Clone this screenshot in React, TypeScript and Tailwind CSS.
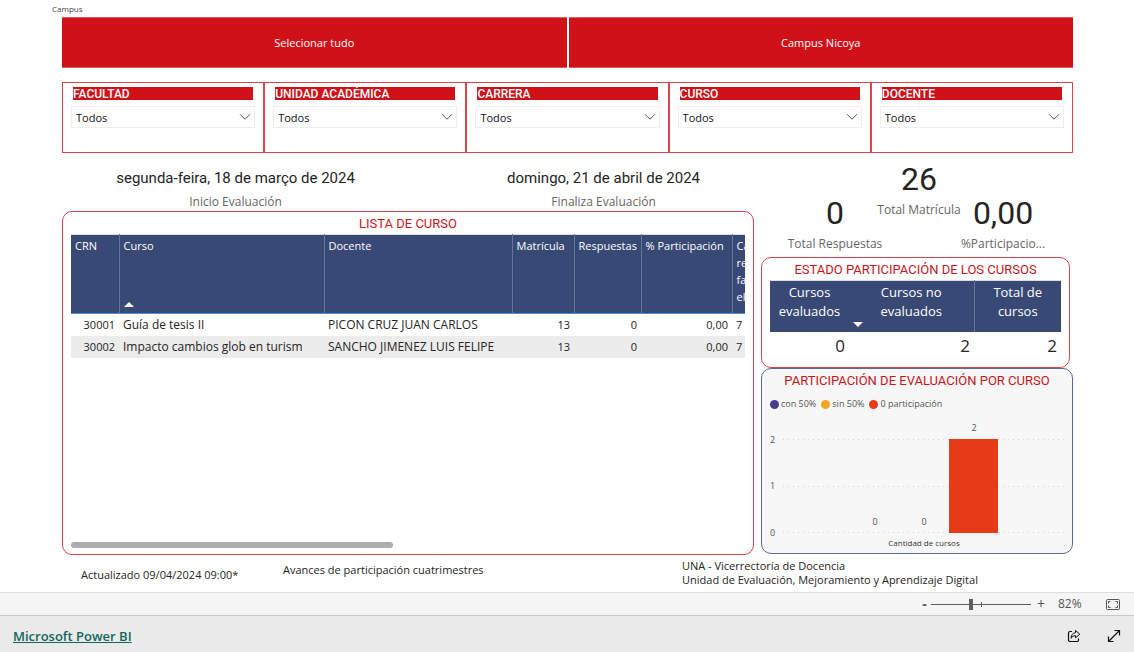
const slicers = [
    { id: 'facultad', label: 'FACULTAD' },
    { id: 'unidad', label: 'UNIDAD ACADÉMICA' },
    { id: 'carrera', label: 'CARRERA' },
    { id: 'curso', label: 'CURSO' },
    { id: 'docente', label: 'DOCENTE' },
];

const courses = [
    { crn: '30001', curso: 'Guía de tesis II', docente: 'PICON CRUZ JUAN CARLOS', matricula: 13, respuestas: 0, pct: '0,00', faltan: 7 },
    { crn: '30002', curso: 'Impacto cambios glob en turism', docente: 'SANCHO JIMENEZ LUIS FELIPE', matricula: 13, respuestas: 0, pct: '0,00', faltan: 7 },
];

const legend = [
    { label: 'con 50%', color: 'bg-[#4a3c8f]' },
    { label: 'sin 50%', color: 'bg-[#f5a623]' },
    { label: '0 participación', color: 'bg-[#e73a16]' },
];

function CampusTiles() {
    return (
        <div className="grid grid-cols-2 gap-[2px]">
            {['Selecionar tudo', 'Campus Nicoya'].map((name) => (
                <button
                    key={name}
                    type="button"
                    className="h-[51px] border-y border-[#dd5a60] bg-[#d01218] pt-[2px] text-[11px] text-white"
                >
                    {name}
                </button>
            ))}
        </div>
    );
}

function Slicer({ id, label }: { id: string; label: string }) {
    return (
        <div className="h-[71px] border border-[#d8454c] px-2 pt-1">
            <label
                htmlFor={id}
                className="mx-[2px] block h-[13px] bg-[#d01218] font-['Roboto',sans-serif] text-[12px] leading-[15px] font-medium text-white"
            >
                {label}
            </label>
            <div className="relative mt-[6px]">
                <select
                    id={id}
                    className="block h-[22px] w-full appearance-none border border-[#eeeeee] bg-white pt-px pl-1 text-[11px] leading-5 text-[#111111]"
                >
                    <option>Todos</option>
                </select>
                <svg
                    viewBox="0 0 12 8"
                    className="pointer-events-none absolute top-[7px] right-[4px] h-2 w-3"
                    fill="none"
                    stroke="#555566"
                >
                    <path d="M1 1.2 6 6.2l5-5" />
                </svg>
            </div>
        </div>
    );
}

function DateCard({ value, label }: { value: string; label: string }) {
    return (
        <div className="flex flex-col items-center whitespace-nowrap">
            <p className="font-['Roboto',sans-serif] text-[15px] leading-5 text-[#252423]">{value}</p>
            <p className="mt-1 text-[12px] leading-5 text-[#666666]">{label}</p>
        </div>
    );
}

function Kpi({ value, label, low }: { value: string; label: string; low?: boolean }) {
    return (
        <div className={`flex flex-col items-center whitespace-nowrap ${low ? 'pt-[34px]' : ''}`}>
            <p className="font-['Roboto',sans-serif] text-[32px] leading-9 text-[#252423]">{value}</p>
            <p className="mt-[3px] text-[12px] leading-5 text-[#666666]">{label}</p>
        </div>
    );
}

function CourseTable() {
    return (
        <section className="flex h-[344px] flex-col rounded-[10px] border border-[#d8454c] px-2">
            <h2 className="pt-[2px] text-center font-['Roboto',sans-serif] text-[13px] leading-5 text-[#c8141c]">
                LISTA DE CURSO
            </h2>
            <div className="overflow-hidden">
                <table className="w-full table-fixed border-collapse text-[11px] text-[#252423]">
                    <colgroup>
                        <col className="w-[48px]" />
                        <col />
                        <col className="w-[188px]" />
                        <col className="w-[62px]" />
                        <col className="w-[67px]" />
                        <col className="w-[91px]" />
                        <col className="w-[13px]" />
                    </colgroup>
                    <thead>
                        <tr className="h-[79px] border-t border-b border-t-[#dddddd] border-b-[#4d8fdc] bg-[#384975] text-left align-top leading-[17px] text-white [&>th]:border-r [&>th]:border-[#66749a] [&>th]:pt-[2px] [&>th]:pl-1 [&>th]:font-normal [&>th]:whitespace-nowrap [&>th:last-child]:border-r-0">
                            <th>CRN</th>
                            <th>
                                Curso
                                <svg viewBox="0 0 10 5" className="mt-[48px] h-[5px] w-[10px]" fill="#ffffff">
                                    <path d="M0 5 5 0l5 5z" />
                                </svg>
                            </th>
                            <th>Docente</th>
                            <th>Matrícula</th>
                            <th>Respuestas</th>
                            <th>% Participación</th>
                            <th className="overflow-hidden">
                                Ca
                                <br />
                                re
                                <br />
                                fa
                                <br />
                                el
                            </th>
                        </tr>
                    </thead>
                    <tbody>
                        {courses.map((c) => (
                            <tr
                                key={c.crn}
                                className="h-[22px] leading-[22px] even:bg-[#ececec] [&>td]:px-1 [&>td]:whitespace-nowrap"
                            >
                                <td className="text-right">{c.crn}</td>
                                <td className="text-[12px]">{c.curso}</td>
                                <td className="text-[12px]">{c.docente}</td>
                                <td className="text-right">{c.matricula}</td>
                                <td className="text-right">{c.respuestas}</td>
                                <td className="text-right">{c.pct}</td>
                                <td>{c.faltan}</td>
                            </tr>
                        ))}
                    </tbody>
                </table>
            </div>
            <div className="mt-auto mb-[6px] h-[6px] w-[322px] rounded-full bg-[#adadad]" />
        </section>
    );
}

function StatusTable() {
    return (
        <section className="mr-[3px] h-[111px] rounded-[10px] border border-[#d8454c] px-2">
            <h2 className="pt-[2px] text-center font-['Roboto',sans-serif] text-[13px] leading-5 text-[#c8141c]">
                ESTADO PARTICIPACIÓN DE LOS CURSOS
            </h2>
            <table className="w-full table-fixed border-collapse text-[#252423]">
                <colgroup>
                    <col className="w-[79px]" />
                    <col />
                    <col className="w-[87px]" />
                </colgroup>
                <thead>
                    <tr className="h-[51px] border-t border-[#dddddd] bg-[#384975] align-top text-[13px] leading-[19px] text-white [&>th]:pt-[2px] [&>th]:font-normal">
                        <th>
                            Cursos
                            <br />
                            evaluados
                        </th>
                        <th className="relative border-r border-[#66749a]">
                            Cursos no
                            <br />
                            evaluados
                            <svg
                                viewBox="0 0 10 5"
                                className="absolute bottom-[5px] left-1 h-[5px] w-[10px]"
                                fill="#ffffff"
                            >
                                <path d="M0 0h10L5 5z" />
                            </svg>
                        </th>
                        <th>
                            Total de
                            <br />
                            cursos
                        </th>
                    </tr>
                </thead>
                <tbody>
                    <tr className="text-right text-[17px] leading-7 [&>td]:pr-1">
                        <td>0</td>
                        <td>2</td>
                        <td>2</td>
                    </tr>
                </tbody>
            </table>
        </section>
    );
}

function ParticipationChart() {
    return (
        <section className="h-[186px] overflow-hidden rounded-[10px] border border-[#596a96] bg-[#f7f7f7]">
            <h2 className="pt-[2px] text-center font-['Roboto',sans-serif] text-[13px] leading-5 text-[#c8141c]">
                PARTICIPACIÓN DE EVALUACIÓN POR CURSO
            </h2>
            <ul className="mt-[6px] flex gap-[5px] px-2 text-[9px] leading-[14px] text-[#555555]">
                {legend.map((item) => (
                    <li key={item.label} className="flex items-center gap-[2px]">
                        <span className={`size-[9px] rounded-full ${item.color}`} />
                        {item.label}
                    </li>
                ))}
            </ul>
            <svg viewBox="0 0 310 138" className="w-full text-[9px]" fill="#555555">
                <g stroke="#d2d2d2" strokeDasharray="1 4">
                    <path d="M21 28.500H304M21 75.500H304M21 121.500H304" />
                </g>
                <rect x="187" y="28" width="49" height="94" fill="#e73a16" />
                <g textAnchor="middle">
                    <text x="10.500" y="32">2</text>
                    <text x="10.500" y="78">1</text>
                    <text x="10.500" y="125">0</text>
                    <text x="113" y="114">0</text>
                    <text x="162" y="114">0</text>
                    <text x="212" y="20">2</text>
                    <text x="162" y="135" className="text-[8px]" fill="#333333">
                        Cantidad de cursos
                    </text>
                </g>
            </svg>
        </section>
    );
}

function ZoomBar() {
    return (
        <div className="flex h-[23px] items-center justify-end border-t border-[#dddddd] bg-[#f5f5f5] pr-[14px] text-[#555555]">
            <button type="button" aria-label="Reducir" className="w-[13px] text-center text-[14px] leading-5 font-bold">
                -
            </button>
            <div className="relative flex h-3 items-center">
                <input
                    type="range"
                    aria-label="Zoom"
                    min={10}
                    max={190}
                    defaultValue={82}
                    className="h-px w-[100px] appearance-none bg-[#605e5c] [&::-webkit-slider-thumb]:h-[11px] [&::-webkit-slider-thumb]:w-1 [&::-webkit-slider-thumb]:appearance-none [&::-webkit-slider-thumb]:bg-[#605e5c]"
                />
                <span className="absolute left-1/2 h-[5px] w-px bg-[#605e5c]" />
            </div>
            <button type="button" aria-label="Ampliar" className="w-5 text-center text-[14px] leading-5">
                +
            </button>
            <span className="w-[55px] pl-[7px] text-[12px] leading-5">82%</span>
            <button type="button" aria-label="Ajustar a la página">
                <svg viewBox="0 0 14 11" className="h-[11px] w-[14px]" fill="none" stroke="#555555">
                    <rect x=".5" y=".5" width="13" height="10" rx="1" />
                    <path d="M4.500 2.500h-2v2M2.500 6.500v2h2M9.500 2.500h2v2M11.500 6.500v2h-2" />
                </svg>
            </button>
        </div>
    );
}

function EmbedFooter() {
    return (
        <footer className="flex h-[37px] items-center justify-between border-t border-[#c8c8c8] bg-[#eaeaea] px-[13px] pt-1">
            <a href="#" className="text-[13px] leading-5 font-semibold text-[#11655a] underline">
                Microsoft Power BI
            </a>
            <div className="flex items-center gap-[26px] text-[#111111]">
                <button type="button" aria-label="Compartir">
                    <svg viewBox="0 0 14 14" className="size-[14px]" fill="none" stroke="currentColor">
                        <path d="M5 2.500H3A1.500 1.500 0 0 0 1.500 4v7A1.500 1.500 0 0 0 3 12.500h7a1.500 1.500 0 0 0 1.500-1.500v-1.500" strokeWidth="1.200" />
                        <path d="M8.500 1.500 12.800 5.200 8.500 8.800V6.700C6.500 6.700 5 7.500 4 9.300 4.200 6 5.700 4 8.500 3.700z" strokeLinejoin="round" />
                    </svg>
                </button>
                <button type="button" aria-label="Pantalla completa">
                    <svg viewBox="0 0 14 14" className="size-[14px]" fill="none" stroke="currentColor" strokeWidth="1.200">
                        <path d="M1.500 12.500 12.500 1.500M7.500 1.500h5v5M1.500 7.500v5h5" />
                    </svg>
                </button>
            </div>
        </footer>
    );
}

export default function App() {
    return (
        <div className="bg-white font-['Open_Sans',sans-serif] text-[#252423]">
            <p className="pt-[3px] pl-[52px] text-[8px] leading-3 text-[#444444]">Campus</p>

            <main className="mt-[2px] pr-[61px] pl-[62px]">
                <CampusTiles />

                <div className="mt-[14px] grid grid-cols-5">
                    {slicers.map((s) => (
                        <Slicer key={s.id} id={s.id} label={s.label} />
                    ))}
                </div>

                <div className="grid grid-cols-[692fr_312fr] gap-[7px]">
                    <div>
                        <div className="grid h-[58px] grid-cols-[260fr_214fr] gap-[130px] px-[43px] pt-[15px]">
                            <DateCard value="segunda-feira, 18 de março de 2024" label="Inicio Evaluación" />
                            <DateCard value="domingo, 21 de abril de 2024" label="Finaliza Evaluación" />
                        </div>
                        <CourseTable />
                    </div>

                    <div>
                        <div className="grid h-[104px] grid-cols-3 pt-2 pr-[28px] pl-[32px]">
                            <Kpi value="0" label="Total Respuestas" low />
                            <Kpi value="26" label="Total Matrícula" />
                            <Kpi value="0,00" label="%Participacio..." low />
                        </div>
                        <StatusTable />
                        <ParticipationChart />
                    </div>
                </div>

                <div className="flex h-[37px] text-[11px] leading-[14px]">
                    <p className="w-[221px] pt-[13px] pl-[19px]">Actualizado 09/04/2024 09:00*</p>
                    <p className="flex-1 pt-2">Avances de participación cuatrimestres</p>
                    <p className="w-[391px] pt-1">
                        UNA - Vicerrectoría de Docencia
                        <br />
                        Unidad de Evaluación, Mejoramiento y Aprendizaje Digital
                    </p>
                </div>
            </main>

            <ZoomBar />
            <EmbedFooter />
        </div>
    );
}
